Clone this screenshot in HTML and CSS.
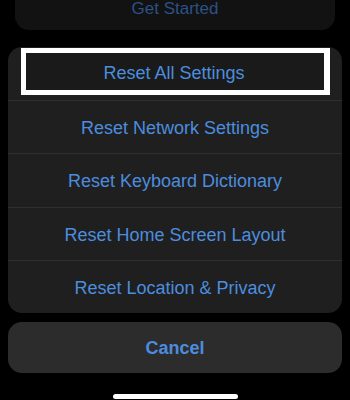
FILE: index.html
```html
<!DOCTYPE html>
<html>
<head>
<meta charset="utf-8">
<link rel="stylesheet" href="styles.css">
</head>
<body>
<div class="screen">
  <div class="top-card"><span class="top-text">Get Started</span></div>
  <div class="sheet">
    <div class="row row-first"><div class="highlight">Reset All Settings</div></div>
    <div class="row">Reset Network Settings</div>
    <div class="row row-tall">Reset Keyboard Dictionary</div>
    <div class="row">Reset Home Screen Layout</div>
    <div class="row">Reset Location &amp; Privacy</div>
  </div>
  <div class="cancel">Cancel</div>
  <div class="home-bar"></div>
</div>
</body>
</html>
```

FILE: styles.css
```css
html, body {
  margin: 0;
  padding: 0;
  background: #000;
}
.screen {
  width: 350px;
  height: 400px;
  overflow: hidden;
  display: flex;
  flex-direction: column;
  font-family: "Liberation Sans", Arial, sans-serif;
  font-size: 18px;
  color: #4c8ddf;
}
.top-card {
  margin: 0 15px;
  height: 30px;
  background: #121212;
  border-radius: 0 0 14px 14px;
  display: flex;
  justify-content: center;
  align-items: flex-start;
}
.top-text {
  color: #2b5186;
  font-size: 17px;
  line-height: 17px;
}
.sheet {
  margin: 17px 8px 0;
  background: #1f1f1f;
  border-radius: 14px;
  display: flex;
  flex-direction: column;
  overflow: hidden;
}
.row {
  height: 53px;
  display: flex;
  align-items: center;
  justify-content: center;
  border-top: 1px solid #2f2f2f;
  box-sizing: border-box;
  padding-top: 2px;
}
.row-tall {
  height: 54px;
}
.row-first {
  border-top: none;
  align-items: flex-start;
  padding: 1px 12px 0 13px;
}
.highlight {
  flex: 1;
  height: 47px;
  box-sizing: border-box;
  border: 5px solid #fff;
  border-right-width: 6px;
  background: #1a1a1a;
  display: flex;
  align-items: center;
  justify-content: center;
  padding: 3px 2px 0 0;
}
.cancel {
  margin: 9px 8px 0;
  height: 51px;
  background: #2c2c2c;
  border-radius: 14px;
  display: flex;
  align-items: center;
  justify-content: center;
  font-weight: bold;
  padding-top: 2px;
  box-sizing: border-box;
}
.home-bar {
  width: 125px;
  height: 5px;
  background: #fff;
  border-radius: 3px;
  margin: 21px auto 0;
}
```
